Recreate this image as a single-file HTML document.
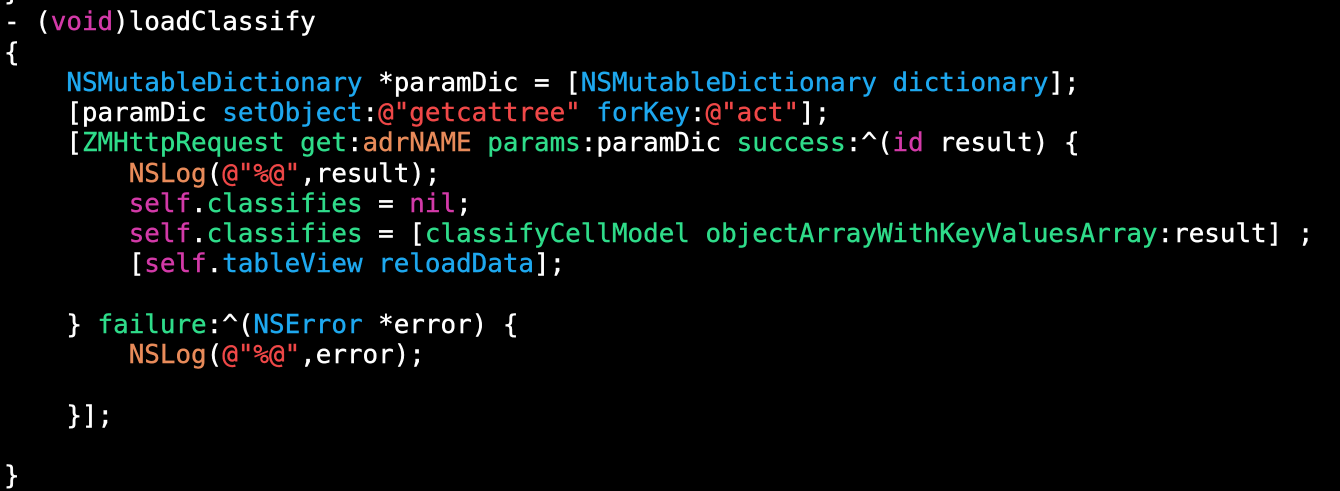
<!DOCTYPE html>
<html><head><meta charset="utf-8"><style>
html,body{margin:0;padding:0;background:#000;width:1340px;height:490px;overflow:hidden}
pre{position:absolute;left:4px;top:-23px;margin:0;font-family:"DejaVu Sans Mono","Liberation Mono",monospace;font-size:25.9px;line-height:30.25px;color:#fff;font-weight:normal;-webkit-text-stroke:0.4px currentColor}
.k{color:#d33aa8}.b{color:#1ea8ef}.g{color:#2fdc8a}.o{color:#e88b5a}.r{color:#f04848}
</style></head><body><pre>}
- (<span class="k">void</span>)loadClassify
{
    <span class="b">NSMutableDictionary</span> *paramDic = [<span class="b">NSMutableDictionary</span> <span class="b">dictionary</span>];
    [paramDic <span class="b">setObject</span>:<span class="r">@"getcattree"</span> <span class="b">forKey</span>:<span class="r">@"act"</span>];
    [<span class="g">ZMHttpRequest</span> <span class="g">get</span>:<span class="o">adrNAME</span> <span class="g">params</span>:paramDic <span class="g">success</span>:^(<span class="k">id</span> result) {
        <span class="o">NSLog</span>(<span class="r">@"%@"</span>,result);
        <span class="k">self</span>.<span class="g">classifies</span> = <span class="k">nil</span>;
        <span class="k">self</span>.<span class="g">classifies</span> = [<span class="g">classifyCellModel</span> <span class="g">objectArrayWithKeyValuesArray</span>:result] ;
        [<span class="k">self</span>.<span class="b">tableView</span> <span class="b">reloadData</span>];

    } <span class="g">failure</span>:^(<span class="b">NSError</span> *error) {
        <span class="o">NSLog</span>(<span class="r">@"%@"</span>,error);

    }];

}
</pre></body></html>
